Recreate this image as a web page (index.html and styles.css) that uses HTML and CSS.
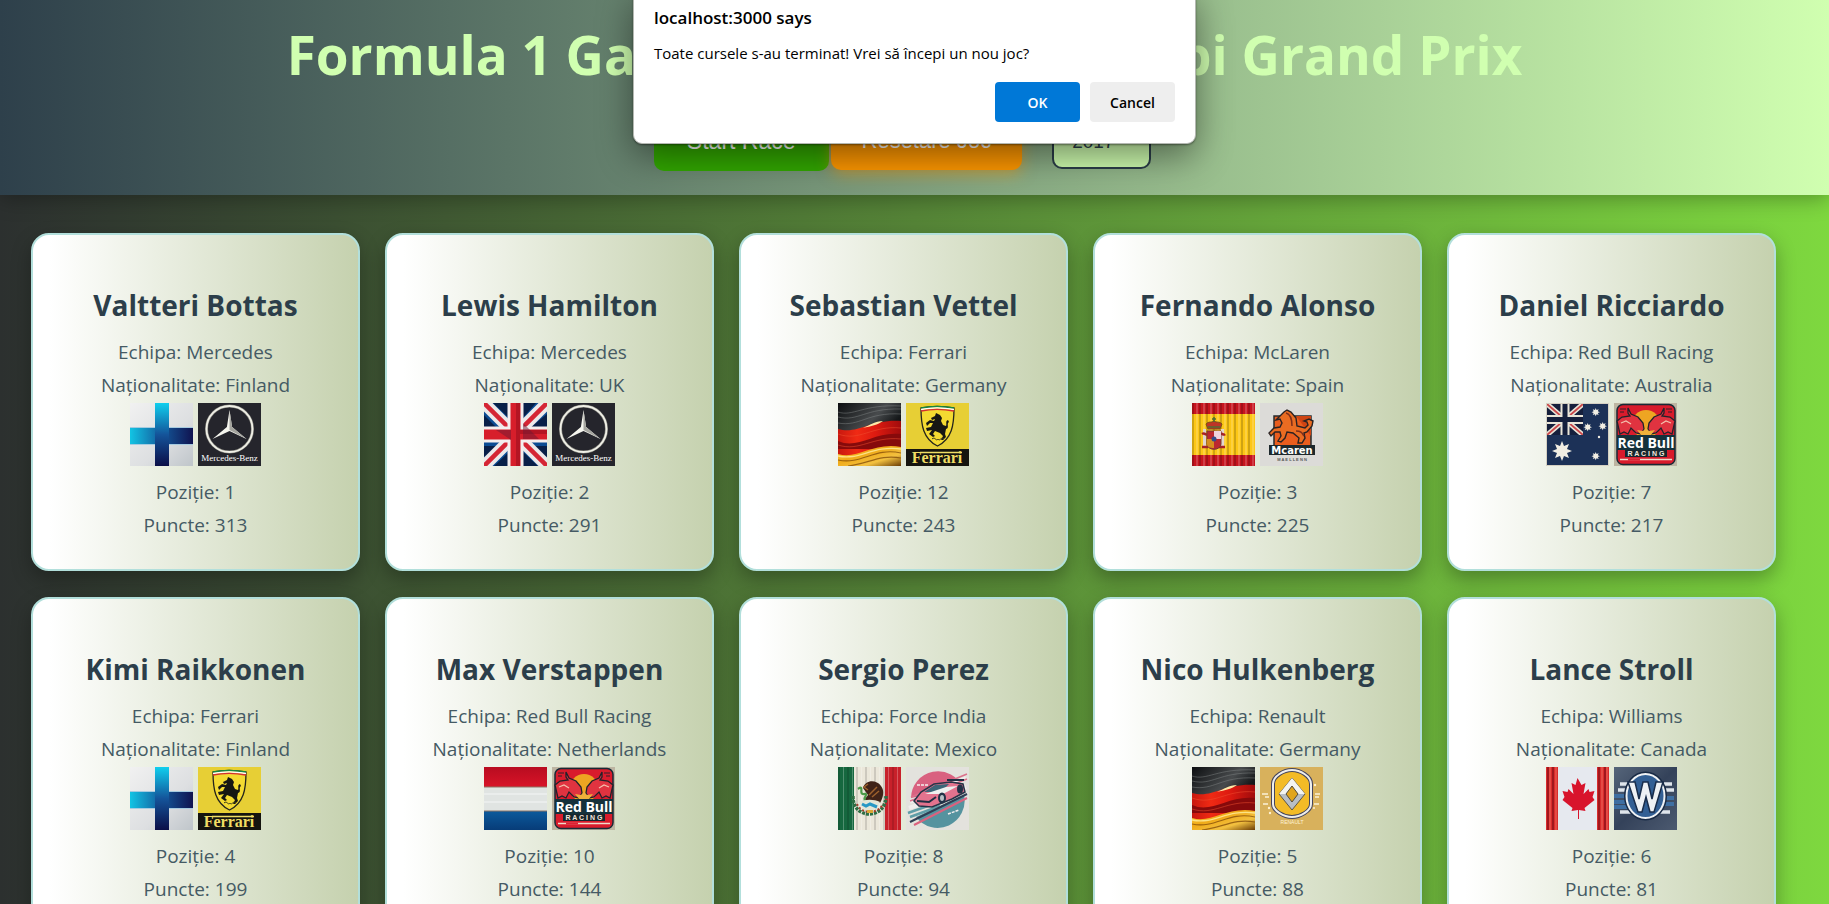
FILE: index.html
```html
<!DOCTYPE html>
<html lang="ro">
<head>
<meta charset="utf-8">
<meta name="viewport" content="width=device-width, initial-scale=1">
<title>Formula 1 Game</title>
<link rel="stylesheet" href="styles.css">
</head>
<body>
<svg class="sprite" aria-hidden="true">
  <defs>
    <linearGradient id="g-paper" x1="0" y1="0" x2="1" y2="1"><stop offset="0" stop-color="#f1f1f1"/><stop offset=".6" stop-color="#dddfe1"/><stop offset="1" stop-color="#bfc5ca"/></linearGradient>
    <linearGradient id="g-finh" x1="0" y1="0" x2="1" y2="0"><stop offset="0" stop-color="#12c4e4"/><stop offset=".5" stop-color="#145a9c"/><stop offset="1" stop-color="#101350"/></linearGradient>
    <linearGradient id="g-finv" x1="0" y1="0" x2="0" y2="1"><stop offset="0" stop-color="#10cfee"/><stop offset=".5" stop-color="#14549a"/><stop offset="1" stop-color="#0b0e48"/></linearGradient>
    <linearGradient id="g-black" x1="0" y1="0" x2="1" y2="1"><stop offset="0" stop-color="#0c0e10"/><stop offset=".4" stop-color="#484b4d"/><stop offset=".6" stop-color="#15181a"/><stop offset="1" stop-color="#08090a"/></linearGradient>
    <linearGradient id="g-red" x1="0" y1="0" x2="1" y2="0"><stop offset="0" stop-color="#c8180e"/><stop offset=".3" stop-color="#f02a14"/><stop offset=".6" stop-color="#dd1a10"/><stop offset="1" stop-color="#a00c0c"/></linearGradient>
    <linearGradient id="g-gold" x1="0" y1="0" x2="1" y2="1"><stop offset="0" stop-color="#ffd84a"/><stop offset=".4" stop-color="#f0aa18"/><stop offset=".7" stop-color="#f2c040"/><stop offset="1" stop-color="#6a3c06"/></linearGradient>
    <linearGradient id="g-nlr" x1="0" y1="0" x2="0" y2="1"><stop offset="0" stop-color="#b80c20"/><stop offset="1" stop-color="#d81428"/></linearGradient>
    <linearGradient id="g-nlb" x1="0" y1="0" x2="0" y2="1"><stop offset="0" stop-color="#0b5a9c"/><stop offset="1" stop-color="#073c78"/></linearGradient>
    <linearGradient id="g-slate" x1="0" y1="0" x2="1" y2="1"><stop offset="0" stop-color="#56657a"/><stop offset=".5" stop-color="#34425a"/><stop offset="1" stop-color="#4c5a70"/></linearGradient>
    <pattern id="p-curtain" width="7" height="63" patternUnits="userSpaceOnUse"><rect width="2" height="63" fill="#000" opacity=".18"/><rect x="4" width="2" height="63" fill="#fff" opacity=".18"/></pattern>
    <pattern id="p-fold" width="9" height="63" patternUnits="userSpaceOnUse"><rect width="2" height="63" fill="#000" opacity=".13"/><rect x="5" width="1" height="63" fill="#fff" opacity=".25"/></pattern>
  </defs>

  <symbol id="finland" viewBox="0 0 63 63">
    <rect width="63" height="63" fill="url(#g-paper)"/>
    <path d="M0 24h63v18H0z" fill="#a6cbe0"/>
    <path d="M0 25h63v16H0z" fill="url(#g-finh)"/>
    <path d="M25 0h14v63H25z" fill="url(#g-finv)"/>
  </symbol>

  <symbol id="uk" viewBox="0 0 63 63">
    <rect width="63" height="63" fill="#0b4c94"/>
    <path d="M9 0h17v16zM38 0h14L38 16zM63 11v13H47zM0 43h14L0 54zM45 43h18v11zM37 47l17 16H37zM0 12l12 12H0zM10 63l16-15v15z" fill="#081f48"/>
    <path d="M0 0l63 63M63 0L0 63" stroke="#ece9ea" stroke-width="12"/>
    <path d="M0 0l63 63M63 0L0 63" stroke="#d52534" stroke-width="4.500"/>
    <path d="M0 31.500h63M31.500 0v63" stroke="#f3eeee" stroke-width="16"/>
    <path d="M0 31.500h63M31.500 0v63" stroke="#d71e2b" stroke-width="10"/>
    <path d="M32 0h4v27h27v4H36v32h-4z" fill="#a51121" opacity=".7"/>
    <path d="M12 27l15 10v-10zM39 20l16 16H39z" fill="#6c1a34" opacity=".5"/>
  </symbol>

  <symbol id="germany" viewBox="0 0 63 63">
    <rect width="63" height="63" fill="url(#g-black)"/>
    <path d="M0 9c15 5 25-8 63-6M0 14c20 5 27-9 63-8M0 20c22 4 29-11 63-9" fill="none" stroke="#85898a" stroke-width=".9" opacity=".5"/>
    <path d="M0 26c20 6 32-10 63-8v45H0z" fill="url(#g-red)"/>
    <path d="M0 38c20 9 36-10 63-7v15H0z" fill="#860a0b"/>
    <path d="M0 31c22 8 34-9 63-6M0 42c22 7 34-9 63-6" fill="none" stroke="#f05030" stroke-width="1" opacity=".5"/>
    <path d="M25 25c7-3 12-7 20-7-5 4-12 5-20 7z" fill="#ffe9a8"/>
    <path d="M0 51c20 6 34-12 63-7v19H0z" fill="url(#g-gold)"/>
    <path d="M0 57c24 5 36-13 63-7M10 63c20-2 32-12 53-8" fill="none" stroke="#784205" stroke-width="1.200" opacity=".7"/>
    <path d="M0 53c22 5 34-11 63-7" fill="none" stroke="#fff0a0" stroke-width="1.300" opacity=".8"/>
  </symbol>

  <symbol id="spain" viewBox="0 0 63 63">
    <rect width="63" height="63" fill="#fcc716"/>
    <path d="M0 0h63v11H0zM0 52h63v11H0z" fill="#c6141e"/>
    <rect width="63" height="63" fill="url(#p-curtain)"/>
    <path d="M11 26h3v19h-3zM29 26h3v19h-3z" fill="#e2d4cf"/>
    <path d="M10 31c3-2 4 2 6 0M27 31c3-2 4 2 6 0M10 44h6M27 44h6" stroke="#a82125" stroke-width="2.500" fill="none"/>
    <path d="M15 28h14v13c0 7-14 7-14 0z" fill="#bc2730" stroke="#743b32"/>
    <path d="M22 28h7v8h-7z" fill="#efd2dc"/><path d="M15 36h7v9c-4 0-7-1-7-4z" fill="#d58d20"/>
    <circle cx="22" cy="36" r="2.500" fill="#354c89"/>
    <path d="M16 26l-2-5c3-3 5-1 8-3 3 2 5 0 8 3l-2 5z" fill="#be3427" stroke="#785117"/>
    <path d="M22 14v5M20 16h4M16 24h12" stroke="#4f6d35" stroke-width="1.500"/>
  </symbol>

  <symbol id="australia" viewBox="0 0 63 63">
    <path d="M0 0h63v63H0z" fill="#d5d0c3"/><path d="M1 1h61v61H1z" fill="#1c3157"/>
    <svg x="1" y="1" width="36" height="31" viewBox="0 0 36 31">
      <path d="M0 0h36v31H0z" fill="#151f3c"/>
      <path d="M0 0l36 31M36 0L0 31" stroke="#e9e5d8" stroke-width="5"/>
      <path d="M0 0l36 31M36 0L0 31" stroke="#c9474a" stroke-width="1.800"/>
      <path d="M0 15.500h36M18 0v31" stroke="#e9e5d8" stroke-width="9"/>
      <path d="M0 15.500h36M18 0v31" stroke="#151f3c" stroke-width="5"/>
    </svg>
    <g fill="#f1eee3">
      <path id="star" d="M16 38l2 5 5-2-2 5 5 2-5 2 2 5-5-2-2 5-2-5-5 2 2-5-5-2 5-2-2-5 5 2z"/>
      <use href="#star" transform="translate(43 -11) scale(.42)"/>
      <use href="#star" transform="translate(35 4) scale(.42)"/>
      <use href="#star" transform="translate(50 3) scale(.42)"/>
      <use href="#star" transform="translate(43 33) scale(.42)"/>
      <circle cx="53" cy="34" r="1.200"/>
    </g>
  </symbol>

  <symbol id="netherlands" viewBox="0 0 63 63">
    <rect width="63" height="63" fill="#e0e4e2"/>
    <path d="M0 0h63v20H0z" fill="url(#g-nlr)"/><path d="M0 44h63v19H0z" fill="url(#g-nlb)"/>
    <path d="M0 20h63M0 44h63" stroke="#8d7564" stroke-width="1"/>
    <path d="M0 27h63M0 35h63" stroke="#fff" stroke-width="2" opacity=".35"/>
  </symbol>

  <symbol id="mexico" viewBox="0 0 63 63">
    <rect width="63" height="63" fill="#ebe7da"/>
    <path d="M0 0h16v63H0z" fill="#16683f"/><path d="M47 0h16v63H47z" fill="#c8202a"/>
    <rect width="63" height="63" fill="url(#p-fold)"/>
    <path d="M15 29c-1 24 33 24 33 0" fill="none" stroke="#2e6e43" stroke-width="3.500" stroke-dasharray="3 1"/>
    <path d="M19 37c4 10 21 11 26 0" fill="none" stroke="#a33d2b" stroke-width="2" stroke-dasharray="2 2"/>
    <path d="M25 21c2-8 13-9 18-2 4 5 2 12-1 17l-8-2-10 2 6-8z" fill="#402318"/>
    <path d="M30 17l-4 3 4 3M31 28l8-8M34 30l7-6" stroke="#9d612d" stroke-width="1.500" fill="none"/>
    <path d="M20 22c7-5 0 6 6 5s-3 5 2 7" fill="none" stroke="#4b9a48" stroke-width="2.200"/>
    <path d="M21 35c6-3 15-3 21 0l-5 8H26z" fill="#e3e6d6"/><path d="M24 37l4 2 4-2 7 3" stroke="#2798c5" stroke-width="3" fill="none"/>
    <path d="M29 43h6v3h-6z" fill="#dba735"/>
  </symbol>

  <symbol id="canada" viewBox="0 0 63 63">
    <rect width="63" height="63" fill="#e6e9ef"/>
    <path d="M0 0h12v63H0zM51 0h12v63H51z" fill="#d92c2c"/>
    <path d="M2 0v63M7 0v63M53 0v63M59 0v63" stroke="#8f1019" stroke-width="1.500"/>
    <path d="M4 0v63M10 0v63M56 0v63M61 0v63" stroke="#f16b5e" stroke-width="1"/>
    <path d="M31.500 11l4 7 4-2-2 11 5-5 1 3 5-1-2 6 2 3-10 8 1 3-6.500-1v9h-1v-9l-6.500 1 1-3-10-8 2-3-2-6 5 1 1-3 5 5-2-11 4 2z" fill="#d8142c"/>
  </symbol>

  <symbol id="mercedes" viewBox="0 0 63 63">
    <rect width="63" height="63" fill="#25252c"/>
    <circle cx="31.500" cy="26" r="23" fill="none" stroke="#85847e" stroke-width="3"/>
    <circle cx="31.500" cy="26" r="23" fill="none" stroke="#efefe6" stroke-width="1.800"/>
    <path d="M31.500 7l2.600 17 14.400 12-17-8-17 8 14.400-12z" fill="#f5f5ee"/>
    <path d="M31.500 7l2.600 17 14.400 12-17-9z" fill="#a4a49e"/>
    <text x="31.500" y="58" text-anchor="middle" font-family="Liberation Serif, serif" font-size="9" fill="#fff">Mercedes-Benz</text>
  </symbol>

  <symbol id="ferrari" viewBox="0 0 63 63">
    <rect width="63" height="63" fill="#e7cf35"/>
    <path d="M15 5c10-2 22-2 33 0 0 17-2 31-16.500 38C17 36 15 22 15 5z" fill="#f4da31" stroke="#25251c" stroke-width="1.300"/>
    <path d="M15 5c10-2 22-2 33 0" fill="none" stroke="#168a43" stroke-width="1.500"/>
    <path d="M15 6.500c10-2 22-2 33 0" fill="none" stroke="#fff" stroke-width="1.300"/>
    <path d="M15 8c10-2 22-2 33 0" fill="none" stroke="#d33032" stroke-width="1.300"/>
    <path d="M29 13l1-3 4 2 2 3-1 3 2 4 3 1c1-2-1-5 2-6l1 2c-3 2 1 6-3 7l-1 5 1 3-3 3h-2l2-4-3-3-5-2-2 3 2 2-2 1-4-3 3-4-5 1-1-3 5-1 2-4-3 0-3 3-1-3 4-3 4 1 1-2-3 1-1-2z" fill="#171713"/>
    <path d="M26 36c3-3 4 3 6 0 2 3 3-3 6 0" fill="none" stroke="#393819" stroke-width="1"/>
    <path d="M0 46h63v17H0z" fill="#15140f"/>
    <path d="M14 49.500h42" stroke="#f0dd64" stroke-width="1.500"/>
    <text x="31" y="60" text-anchor="middle" font-family="Liberation Serif, serif" font-weight="bold" font-size="16" fill="#f0dd64">Ferrari</text>
  </symbol>

  <symbol id="mclaren" viewBox="0 0 63 63">
    <rect width="63" height="63" fill="#dcdbd8"/>
    <path d="M14 13h37v30H14z" fill="#e95d1e" stroke="#262b2e" stroke-width="1.500"/>
    <path d="M36 13h15v20z" fill="#cf4413"/>
    <path d="M19 14l5-5 3-2 4 2 5 6 1 8 8 2 3-3-1-3-3-1 5-2 4 2-1 5-5 6-3 1 1 5-3 5h-4l1-5-6-5-6-1-2 6-4 4-3-1 3-5-1-4-5 0-4 4-2-3 5-5 6-1 2-4-2-4-4 1z" fill="#ea6c22" stroke="#2a2223" stroke-width="1.400"/>
    <path d="M26 10c4 1 6 6 6 13M36 28c5 0 6 2 8 5" fill="none" stroke="#7d2f1b" stroke-width="1.500"/>
    <path d="M9 42h46v10H9z" fill="#1d282c"/>
    <text x="32" y="50.500" text-anchor="middle" font-family="DejaVu Sans, sans-serif" font-weight="bold" font-size="10" fill="#fff">Mcaren</text>
    <text x="32" y="57.500" text-anchor="middle" font-family="Liberation Sans, sans-serif" font-weight="bold" font-size="4" fill="#57595a">M A E L L E N N</text>
  </symbol>

  <symbol id="redbull" viewBox="0 0 63 63">
    <rect width="63" height="63" fill="#bdb5a2"/>
    <rect x="3" y="1.500" width="58" height="60" rx="6" fill="#d91b2c" stroke="#182a36" stroke-width="1.500"/>
    <circle cx="32" cy="21" r="14" fill="#eea522"/>
    <path id="bull" d="M3 18l5-4 8-1-2-3 0-5 3 6 7 3 5 6 1 6-3 5-5-1-5-5-3 6-4-2-4 2z" fill="#e03340" stroke="#20232b" stroke-width="1.300"/>
    <use href="#bull" transform="matrix(-1 0 0 1 64 0)"/>
    <path d="M7 20l5-2 5 3M57 20l-5-2-5 3" stroke="#f3c0ac" stroke-width="1.200" fill="none"/>
    <path d="M6 6h6M6 9h4M52 6h6M54 9h4" stroke="#33212a" stroke-width="1.200"/>
    <path d="M23 27l6 1 3-3 3 3 6-1-5 6h-8z" fill="#efb13b"/>
    <path d="M3 32h58v15H3z" fill="#15313b"/>
    <text x="32" y="45" text-anchor="middle" font-family="Open Sans, sans-serif" font-weight="bold" font-size="14" fill="#fff">Red Bull</text>
    <path d="M11 47h42v7H11z" fill="#17262e"/>
    <text x="32" y="53" text-anchor="middle" font-family="Liberation Sans, sans-serif" font-weight="bold" font-size="7" fill="#f4e6dc">R A C I N G</text>
    <path d="M6 56.500h52" stroke="#f0dccc" stroke-width="1.600"/><path d="M14 56.500h12" stroke="#da2232" stroke-width="2"/>
  </symbol>

  <symbol id="forceindia" viewBox="0 0 63 63">
    <rect width="63" height="63" fill="#e3e2dd"/>
    <path d="M5 31a27 27 0 0 1 52-10z" fill="#d96180"/><path d="M10 50a27 27 0 0 0 48-22z" fill="#55939f"/>
    <path d="M4 35l56-24M3 41L60 20" stroke="#f0eded" stroke-width="4"/>
    <path d="M5 30L61 7M4 34L61 12" stroke="#db718b" stroke-width="1.600"/>
    <path d="M2 46l28-10M4 50l30-11" stroke="#5e9da7" stroke-width="2.500"/>
    <path d="M4 55l57-28" stroke="#2f3e54" stroke-width="2"/><path d="M8 58l53-27" stroke="#db617e" stroke-width="2"/>
    <path d="M8 34l7-9 13-8 17-2 12 2 2 8-13 7-20 8-13-1z" fill="#e3738e" stroke="#263447" stroke-width="1.500"/>
    <path d="M18 25l11-7 14-1-8 8z" fill="#3c6577"/><path d="M19 27l21-7 12-1-15 8z" fill="#eef0ef"/>
    <path d="M11 34l12 1 7-5M41 13h17" stroke="#202f43" stroke-width="2" fill="none"/>
    <ellipse cx="36" cy="31" rx="4" ry="5.500" fill="#223247"/><ellipse cx="36" cy="31" rx="2" ry="3" fill="#b9c1c6"/>
    <ellipse cx="54" cy="22" rx="3" ry="4.500" fill="#223247"/>
    <path d="M11 18h11M42 47l11-4" stroke="#f4eeee" stroke-width="1.500" stroke-dasharray="3 1"/>
  </symbol>

  <symbol id="renault" viewBox="0 0 63 63">
    <rect width="63" height="63" fill="#d8b15c"/>
    <path id="badge" d="M32 3c8 0 19 6 19 14v20c0 7-11 13-19 13s-19-6-19-13V17c0-8 11-14 19-14z" fill="#f3bb26" stroke="#45455c" stroke-width="4"/>
    <path d="M32 3c8 0 19 6 19 14v20c0 7-11 13-19 13s-19-6-19-13V17c0-8 11-14 19-14z" fill="none" stroke="#eeeeec" stroke-width="2"/>
    <path d="M32 11l13 16-13 16-13-16z" fill="#b8bec4" stroke="#5c5548" stroke-width="1"/>
    <path d="M32 11l13 16h-7l-6-8-6 8h-7z" fill="#f4f4f0"/><path d="M32 19l6 8-6 8-6-8z" fill="#e0a51d" stroke="#524b3e"/>
    <path d="M2 27h6M5 30h4M3 37h5M55 27h5M55 30h4M54 37h5" stroke="#faf1d6" stroke-width="1.300"/>
    <circle cx="9" cy="41" r="1.200" fill="#fff1d0"/><circle cx="10" cy="46" r="1.200" fill="#fff1d0"/><circle cx="55" cy="18" r="1.200" fill="#fff1d0"/><circle cx="54" cy="41" r="1" fill="#fff1d0"/>
    <text x="32" y="57" text-anchor="middle" font-family="Liberation Sans, sans-serif" font-size="5" fill="#fff3d4">RENAULT</text>
  </symbol>

  <symbol id="williams" viewBox="0 0 63 63">
    <rect width="63" height="63" fill="url(#g-slate)"/>
    <path d="M0 29h16M0 35h16M0 40h16M46 31h14M46 37h14" stroke="#3f6fa2" stroke-width="4"/>
    <path d="M6 17h14M4 23h10M50 17h8M52 23h8M6 45h11M46 45h10" stroke="#dfe5eb" stroke-width="3.500"/>
    <ellipse cx="31.500" cy="29" rx="19" ry="22" fill="#3b6ba0" stroke="#182a45" stroke-width="5"/>
    <ellipse cx="31.500" cy="29" rx="19" ry="22" fill="#325f94" stroke="#eef1f4" stroke-width="2"/>
    <path d="M14 15l10 30h4l4-15 4 15h4l9-30h-7l-4 17-4-17h-5l-4 17-4-17z" fill="#eef1f4" stroke="#192d4b" stroke-width="1.500"/>
  </symbol>
</svg>

<header class="top">
  <h1 class="title">Formula 1 Game – Cursa: Abu Dhabi Grand Prix</h1>
  <div class="controls">
    <button class="btn btn-start" type="button">Start Race</button>
    <button class="btn btn-reset" type="button">Resetare Joc</button>
    <select class="year" aria-label="Sezon"><option>2017</option></select>
  </div>
</header>

<main class="grid">
  <article class="card"><h2>Valtteri Bottas</h2><p>Echipa: Mercedes</p><p>Naționalitate: Finland</p>
    <div class="pics"><svg role="img" aria-label="Finland"><use href="#finland"/></svg><svg role="img" aria-label="Mercedes"><use href="#mercedes"/></svg></div>
    <p>Poziție: 1</p><p>Puncte: 313</p></article>
  <article class="card"><h2>Lewis Hamilton</h2><p>Echipa: Mercedes</p><p>Naționalitate: UK</p>
    <div class="pics"><svg role="img" aria-label="UK"><use href="#uk"/></svg><svg role="img" aria-label="Mercedes"><use href="#mercedes"/></svg></div>
    <p>Poziție: 2</p><p>Puncte: 291</p></article>
  <article class="card"><h2>Sebastian Vettel</h2><p>Echipa: Ferrari</p><p>Naționalitate: Germany</p>
    <div class="pics"><svg role="img" aria-label="Germany"><use href="#germany"/></svg><svg role="img" aria-label="Ferrari"><use href="#ferrari"/></svg></div>
    <p>Poziție: 12</p><p>Puncte: 243</p></article>
  <article class="card"><h2>Fernando Alonso</h2><p>Echipa: McLaren</p><p>Naționalitate: Spain</p>
    <div class="pics"><svg role="img" aria-label="Spain"><use href="#spain"/></svg><svg role="img" aria-label="McLaren"><use href="#mclaren"/></svg></div>
    <p>Poziție: 3</p><p>Puncte: 225</p></article>
  <article class="card"><h2>Daniel Ricciardo</h2><p>Echipa: Red Bull Racing</p><p>Naționalitate: Australia</p>
    <div class="pics"><svg role="img" aria-label="Australia"><use href="#australia"/></svg><svg role="img" aria-label="Red Bull Racing"><use href="#redbull"/></svg></div>
    <p>Poziție: 7</p><p>Puncte: 217</p></article>
  <article class="card"><h2>Kimi Raikkonen</h2><p>Echipa: Ferrari</p><p>Naționalitate: Finland</p>
    <div class="pics"><svg role="img" aria-label="Finland"><use href="#finland"/></svg><svg role="img" aria-label="Ferrari"><use href="#ferrari"/></svg></div>
    <p>Poziție: 4</p><p>Puncte: 199</p></article>
  <article class="card"><h2>Max Verstappen</h2><p>Echipa: Red Bull Racing</p><p>Naționalitate: Netherlands</p>
    <div class="pics"><svg role="img" aria-label="Netherlands"><use href="#netherlands"/></svg><svg role="img" aria-label="Red Bull Racing"><use href="#redbull"/></svg></div>
    <p>Poziție: 10</p><p>Puncte: 144</p></article>
  <article class="card"><h2>Sergio Perez</h2><p>Echipa: Force India</p><p>Naționalitate: Mexico</p>
    <div class="pics"><svg role="img" aria-label="Mexico"><use href="#mexico"/></svg><svg role="img" aria-label="Force India"><use href="#forceindia"/></svg></div>
    <p>Poziție: 8</p><p>Puncte: 94</p></article>
  <article class="card"><h2>Nico Hulkenberg</h2><p>Echipa: Renault</p><p>Naționalitate: Germany</p>
    <div class="pics"><svg role="img" aria-label="Germany"><use href="#germany"/></svg><svg role="img" aria-label="Renault"><use href="#renault"/></svg></div>
    <p>Poziție: 5</p><p>Puncte: 88</p></article>
  <article class="card"><h2>Lance Stroll</h2><p>Echipa: Williams</p><p>Naționalitate: Canada</p>
    <div class="pics"><svg role="img" aria-label="Canada"><use href="#canada"/></svg><svg role="img" aria-label="Williams"><use href="#williams"/></svg></div>
    <p>Poziție: 6</p><p>Puncte: 81</p></article>
</main>

<div class="dialog" role="alertdialog" aria-labelledby="dlg-title" aria-describedby="dlg-text">
  <h2 class="dialog-title" id="dlg-title">localhost:3000 says</h2>
  <p class="dialog-text" id="dlg-text">Toate cursele s-au terminat! Vrei să începi un nou joc?</p>
  <div class="dialog-actions">
    <button class="dlg-btn dlg-ok" type="button">OK</button>
    <button class="dlg-btn" type="button">Cancel</button>
  </div>
</div>
</body>
</html>
```

FILE: styles.css
```css
* { box-sizing: border-box; }

html {
  height: 100%;
  overflow: hidden;
}

body {
  margin: 0;
  height: 100%;
  overflow: hidden;
  font-family: "Segoe UI", "Open Sans", "Noto Sans", sans-serif;
  background: linear-gradient(to right, #2c302f, #7ed83f);
  text-align: center;
}

.sprite {
  position: absolute;
  width: 0;
  height: 0;
}

.top {
  padding: 19px 20px 24px 0;
  background: linear-gradient(to right, #2e404b, #d0ffb0);
  box-shadow: 0 4px 20px rgba(0, 0, 0, 0.3);
}

.title {
  margin: 0;
  font-size: 53px;
  line-height: 72px;
  font-weight: 700;
  color: #d0ffb0;
  white-space: nowrap;
}

.controls {
  display: flex;
  justify-content: center;
  align-items: center;
  margin-top: 18px;
  gap: 2px;
}

.btn {
  border: 0;
  border-radius: 10px;
  font-family: "Liberation Sans", Arial, sans-serif;
  color: #fff;
}

.btn-start {
  height: 62px;
  padding: 2px 33px 0;
  font-size: 23px;
  background: #32a800;
}

.btn-reset {
  height: 60px;
  padding: 2px 31px 0;
  font-size: 22px;
  background: #ff9800;
  box-shadow: 0 4px 15px rgba(255, 152, 0, 0.5);
}

.year {
  appearance: none;
  width: 99px;
  height: 58px;
  margin: 0 4px 0 28px;
  padding: 2px 0 0 18px;
  border: 2px solid #2c3e4a;
  border-radius: 10px;
  background: #d0ffb0 url("data:image/svg+xml,%3Csvg xmlns='http://www.w3.org/2000/svg' width='12' height='8'%3E%3Cpath d='M1 1l5 5 5-5' fill='none' stroke='%232c3e4a' stroke-width='2'/%3E%3C/svg%3E") no-repeat right 4px center;
  font-family: "Liberation Sans", Arial, sans-serif;
  font-size: 19px;
  color: #2c3e4a;
}

.grid {
  display: grid;
  grid-template-columns: repeat(5, 1fr);
  gap: 26px 25px;
  padding: 38px 53px 38px 31px;
}

.card {
  padding: 47px 20px 27px;
  border: 2px solid #b2dfdb;
  border-radius: 18px;
  background: linear-gradient(to right, #fff 5%, #c5d1ae);
  box-shadow: 0 8px 20px rgba(0, 0, 0, 0.3);
}

.card h2 {
  margin: 0 0 8px;
  font-size: 28px;
  line-height: 46px;
  font-weight: 700;
  color: #2c3e4a;
}

.card p {
  margin: 0;
  font-size: 19px;
  line-height: 33px;
  color: #455a64;
}

.pics {
  display: flex;
  justify-content: center;
  gap: 5px;
  margin: 1px 0 10px;
}

.pics svg {
  width: 63px;
  height: 63px;
}

.dialog {
  position: absolute;
  top: -11px;
  left: 0;
  right: 0;
  width: 563px;
  margin: 0 auto;
  padding: 16px 20px 21px;
  border: 1px solid #b4b8b2;
  border-radius: 9px;
  background: #fff;
  box-shadow: 0 1px 2px rgba(0, 0, 0, 0.4), 0 12px 36px rgba(0, 0, 0, 0.45);
  text-align: left;
  color: #000;
}

.dialog-title {
  margin: 0;
  font-size: 17px;
  line-height: 24px;
  font-weight: 600;
}

.dialog-text {
  margin: 12px 0 18px;
  font-size: 15px;
  line-height: 22px;
}

.dialog-actions {
  display: flex;
  justify-content: flex-end;
  gap: 10px;
}

.dlg-btn {
  width: 85px;
  height: 40px;
  border: 0;
  border-radius: 4px;
  background: #eee;
  font-family: inherit;
  font-size: 14px;
  font-weight: 600;
  color: #000;
}

.dlg-ok {
  background: #0078d7;
  color: #fff;
}
```
